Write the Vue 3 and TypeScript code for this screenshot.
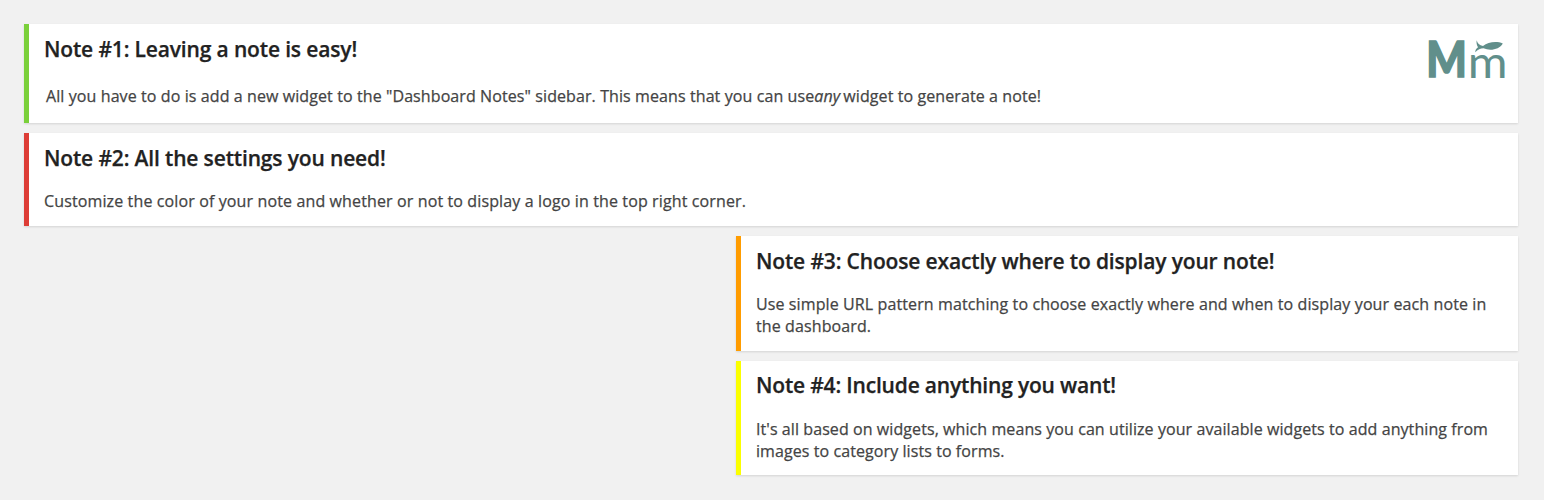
<script setup lang="ts">
interface Note {
  id: number
  title: string
  before: string
  emphasis?: string
  after?: string
  color: string
  half: boolean
  logo: boolean
}

const notes: Note[] = [
  {
    id: 1,
    title: 'Note #1: Leaving a note is easy!',
    before: 'All you have to do is add a new widget to the "Dashboard Notes" sidebar. This means that you can use',
    emphasis: 'any',
    after: ' widget to generate a note!',
    color: 'green',
    half: false,
    logo: true,
  },
  {
    id: 2,
    title: 'Note #2: All the settings you need!',
    before: 'Customize the color of your note and whether or not to display a logo in the top right corner.',
    color: 'red',
    half: false,
    logo: false,
  },
  {
    id: 3,
    title: 'Note #3: Choose exactly where to display your note!',
    before: 'Use simple URL pattern matching to choose exactly where and when to display your each note in the dashboard.',
    color: 'orange',
    half: true,
    logo: false,
  },
  {
    id: 4,
    title: 'Note #4: Include anything you want!',
    before: "It's all based on widgets, which means you can utilize your available widgets to add anything from images to category lists to forms.",
    color: 'yellow',
    half: true,
    logo: false,
  },
]
</script>

<template>
  <main class="dashboard">
    <article
      v-for="note in notes"
      :key="note.id"
      :class="['note', note.color, { half: note.half, branded: note.logo }]"
    >
      <div class="content">
        <h2>{{ note.title }}</h2>
        <p>{{ note.before }}<em v-if="note.emphasis">{{ note.emphasis }}</em>{{ note.after }}</p>
      </div>
      <svg v-if="note.logo" class="logo" viewBox="-4 -14 88 70" aria-label="Mm">
        <text class="big" x="0.2" y="39.2" textLength="40.6" lengthAdjust="spacingAndGlyphs">M</text>
        <text class="small" x="41.8" y="40" textLength="39.8" lengthAdjust="spacingAndGlyphs">m</text>
        <path d="M50.7 2.3C51.2 5.2 53.5 7.4 57 7.9C62 4 70.5 3 76.8 5.4C73.5 11.3 64.5 13.3 57.5 10.3C54.5 10.3 51.8 11.8 49.2 14.3C49.2 12 50.4 10.2 52 9.2C50.8 7.5 50.2 5 50.7 2.3Z" />
      </svg>
    </article>
  </main>
</template>

<style>
body {
  background: #f1f1f1;
}
</style>

<style scoped>
.dashboard {
  box-sizing: border-box;
  display: flex;
  flex-direction: column;
  gap: 10px;
  height: 500px;
  padding: 24px 26px 0 24px;
  font-family: "Open Sans", sans-serif;
}

.note {
  box-sizing: border-box;
  display: flex;
  justify-content: space-between;
  height: 93px;
  padding: 10px 15px 0;
  border-left: 5px solid;
  background: #fff;
  box-shadow: 0 1px 2px rgba(0, 0, 0, 0.12);
}

.branded {
  height: 99px;
  padding-right: 8px;
}

.half {
  width: 782px;
  height: 115px;
  align-self: flex-end;
}

.green { border-color: #7ad03a; }
.red { border-color: #dd3d36; }
.orange { border-color: #ff9c00; }
.yellow {
  height: 114px;
  border-color: #fbff00;
}

h2 {
  margin: 0;
  color: #222;
  font-size: 21px;
  font-weight: 600;
  letter-spacing: -0.15px;
  line-height: 30px;
  -webkit-text-stroke: 0.25px #222;
}

p {
  margin: 17px 0 0;
  color: #444;
  font-size: 16px;
  letter-spacing: 0.127px;
  line-height: 22px;
  -webkit-text-stroke: 0.25px #444;
}

.branded p {
  margin: 21px 0 0 2px;
  letter-spacing: 0.095px;
}

em {
  margin-right: -1.2px;
}

.orange p { letter-spacing: 0.11px; }

.yellow h2 {
  letter-spacing: -0.18px;
  line-height: 29px;
}

.yellow p {
  margin-top: 18px;
  letter-spacing: 0.08px;
}

.logo {
  flex: none;
  width: 88px;
  height: 70px;
  margin-top: -10px;
  fill: #618f8b;
}

.big {
  font: 900 49.6px Lato, sans-serif;
  stroke: #618f8b;
  stroke-width: 1.6px;
}

.small {
  font: 400 44px Lato, sans-serif;
}
</style>
